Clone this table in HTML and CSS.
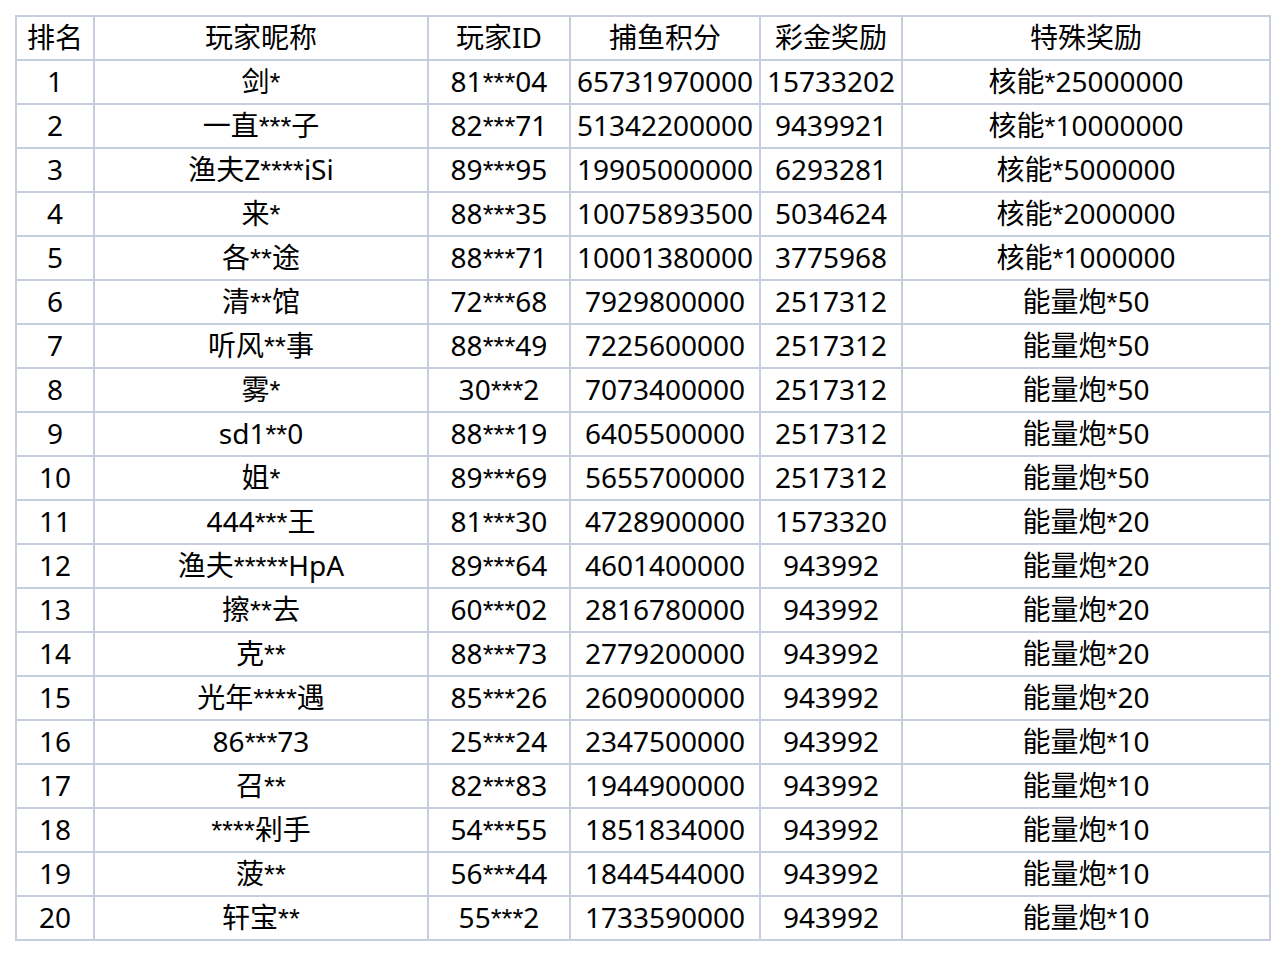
FILE: index.html
```html
<!DOCTYPE html>
<html lang="zh-CN">
<head>
<meta charset="utf-8">
<link rel="stylesheet" href="styles.css">
</head>
<body>
<table class="rank">
<colgroup>
<col class="c1"><col class="c2"><col class="c3"><col class="c4"><col class="c5"><col class="c6">
</colgroup>
<tr><td>排名</td><td>玩家昵称</td><td>玩家ID</td><td>捕鱼积分</td><td>彩金奖励</td><td>特殊奖励</td></tr>
<tr><td>1</td><td>剑<span class="s">*</span></td><td>81<span class="s">***</span>04</td><td>65731970000</td><td>15733202</td><td>核能<span class="s">*</span>25000000</td></tr>
<tr><td>2</td><td>一直<span class="s">***</span>子</td><td>82<span class="s">***</span>71</td><td>51342200000</td><td>9439921</td><td>核能<span class="s">*</span>10000000</td></tr>
<tr><td>3</td><td>渔夫Z<span class="s">****</span>iSi</td><td>89<span class="s">***</span>95</td><td>19905000000</td><td>6293281</td><td>核能<span class="s">*</span>5000000</td></tr>
<tr><td>4</td><td>来<span class="s">*</span></td><td>88<span class="s">***</span>35</td><td>10075893500</td><td>5034624</td><td>核能<span class="s">*</span>2000000</td></tr>
<tr><td>5</td><td>各<span class="s">**</span>途</td><td>88<span class="s">***</span>71</td><td>10001380000</td><td>3775968</td><td>核能<span class="s">*</span>1000000</td></tr>
<tr><td>6</td><td>清<span class="s">**</span>馆</td><td>72<span class="s">***</span>68</td><td>7929800000</td><td>2517312</td><td>能量炮<span class="s">*</span>50</td></tr>
<tr><td>7</td><td>听风<span class="s">**</span>事</td><td>88<span class="s">***</span>49</td><td>7225600000</td><td>2517312</td><td>能量炮<span class="s">*</span>50</td></tr>
<tr><td>8</td><td>雾<span class="s">*</span></td><td>30<span class="s">***</span>2</td><td>7073400000</td><td>2517312</td><td>能量炮<span class="s">*</span>50</td></tr>
<tr><td>9</td><td>sd1<span class="s">**</span>0</td><td>88<span class="s">***</span>19</td><td>6405500000</td><td>2517312</td><td>能量炮<span class="s">*</span>50</td></tr>
<tr><td>10</td><td>姐<span class="s">*</span></td><td>89<span class="s">***</span>69</td><td>5655700000</td><td>2517312</td><td>能量炮<span class="s">*</span>50</td></tr>
<tr><td>11</td><td>444<span class="s">***</span>王</td><td>81<span class="s">***</span>30</td><td>4728900000</td><td>1573320</td><td>能量炮<span class="s">*</span>20</td></tr>
<tr><td>12</td><td>渔夫<span class="s">*****</span>HpA</td><td>89<span class="s">***</span>64</td><td>4601400000</td><td>943992</td><td>能量炮<span class="s">*</span>20</td></tr>
<tr><td>13</td><td>擦<span class="s">**</span>去</td><td>60<span class="s">***</span>02</td><td>2816780000</td><td>943992</td><td>能量炮<span class="s">*</span>20</td></tr>
<tr><td>14</td><td>克<span class="s">**</span></td><td>88<span class="s">***</span>73</td><td>2779200000</td><td>943992</td><td>能量炮<span class="s">*</span>20</td></tr>
<tr><td>15</td><td>光年<span class="s">****</span>遇</td><td>85<span class="s">***</span>26</td><td>2609000000</td><td>943992</td><td>能量炮<span class="s">*</span>20</td></tr>
<tr><td>16</td><td>86<span class="s">***</span>73</td><td>25<span class="s">***</span>24</td><td>2347500000</td><td>943992</td><td>能量炮<span class="s">*</span>10</td></tr>
<tr><td>17</td><td>召<span class="s">**</span></td><td>82<span class="s">***</span>83</td><td>1944900000</td><td>943992</td><td>能量炮<span class="s">*</span>10</td></tr>
<tr><td>18</td><td><span class="s">****</span>剁手</td><td>54<span class="s">***</span>55</td><td>1851834000</td><td>943992</td><td>能量炮<span class="s">*</span>10</td></tr>
<tr><td>19</td><td>菠<span class="s">**</span></td><td>56<span class="s">***</span>44</td><td>1844544000</td><td>943992</td><td>能量炮<span class="s">*</span>10</td></tr>
<tr><td>20</td><td>轩宝<span class="s">**</span></td><td>55<span class="s">***</span>2</td><td>1733590000</td><td>943992</td><td>能量炮<span class="s">*</span>10</td></tr>
</table>
</body>
</html>
```
FILE: styles.css
```css
html, body {
  margin: 0;
  padding: 0;
  background: #ffffff;
}
body {
  padding: 15px;
  font-family: "Noto Sans", "Noto Sans CJK SC", sans-serif;
  font-size: 28px;
  color: #000000;
}
.rank {
  border-collapse: collapse;
  table-layout: fixed;
  width: 1254px;
}
.rank td {
  border: 2px solid #c7cee0;
  height: 40px;
  padding: 0 0 2px 0;
  text-align: center;
  vertical-align: middle;
  line-height: 38px;
  white-space: nowrap;
}
.s {
  font-family: "Liberation Sans", sans-serif;
  line-height: 0;
}
.c1 { width: 78px; }
.c2 { width: 334px; }
.c3 { width: 142px; }
.c4 { width: 190px; }
.c5 { width: 142px; }
.c6 { width: 368px; }
```
